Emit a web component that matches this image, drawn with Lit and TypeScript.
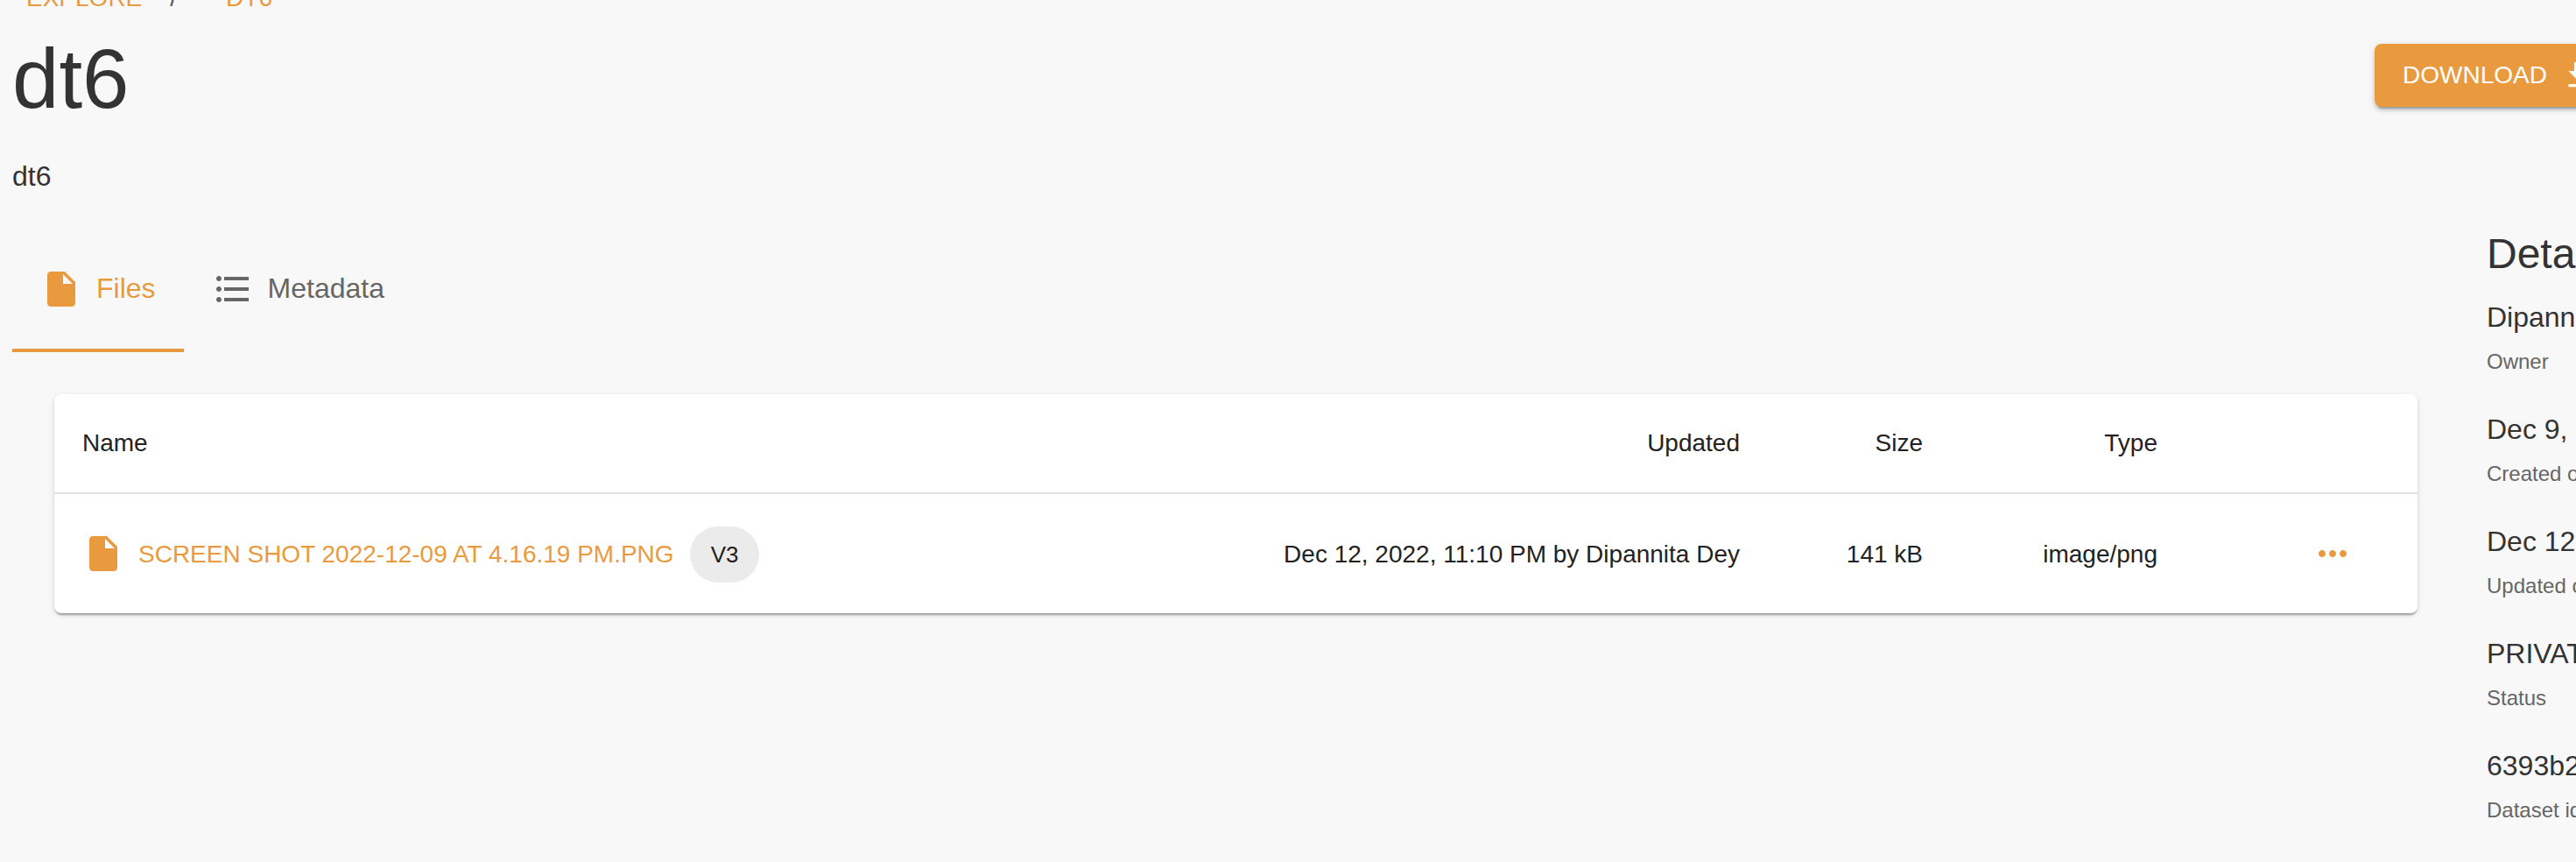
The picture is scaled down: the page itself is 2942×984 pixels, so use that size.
import { LitElement, html, css, svg } from "lit";
import { customElement } from "lit/decorators.js";

const fileIcon = svg`<path d="M6 2c-1.1 0-1.99.9-1.99 2L4 20c0 1.1.89 2 1.99 2H18c1.1 0 2-.9 2-2V8l-6-6H6zm7 7V3.5L18.5 9H13z"/>`;
const listIcon = svg`<path d="M4 10.5c-.83 0-1.5.67-1.5 1.5s.67 1.5 1.5 1.5 1.5-.67 1.5-1.5-.67-1.5-1.5-1.5zm0-6c-.83 0-1.5.67-1.5 1.5S3.17 7.5 4 7.5 5.5 6.83 5.5 6 4.83 4.5 4 4.5zm0 12c-.83 0-1.5.68-1.5 1.5s.68 1.5 1.5 1.5 1.5-.68 1.5-1.5-.67-1.5-1.5-1.5zM7 19h14v-2H7v2zm0-6h14v-2H7v2zm0-8v2h14V5H7z"/>`;
const downloadIcon = svg`<path d="M19 9h-4V3H9v6H5l7 7 7-7zM5 18v2h14v-2H5z"/>`;
const moreIcon = svg`<path d="M6 10c-1.1 0-2 .9-2 2s.9 2 2 2 2-.9 2-2-.9-2-2-2zm12 0c-1.1 0-2 .9-2 2s.9 2 2 2 2-.9 2-2-.9-2-2-2zm-6 0c-1.1 0-2 .9-2 2s.9 2 2 2 2-.9 2-2-.9-2-2-2z"/>`;

const details = [
  { value: "Dipannita Dey", label: "Owner" },
  { value: "Dec 9, 2022, 4:17 PM", label: "Created on" },
  { value: "Dec 12, 2022, 11:10 PM", label: "Updated on" },
  { value: "PRIVATE", label: "Status" },
  { value: "6393b2e5e4b05e7e1c0f3a71", label: "Dataset id" },
];

@customElement("app-root")
export class AppRoot extends LitElement {
  static styles = css`
    :host {
      display: block;
      width: 100vw;
      height: 100vh;
      overflow: hidden;
      background: #f8f8f8;
      font-family: "Liberation Sans", Arial, sans-serif;
      color: #333;
    }
    .page {
      margin-top: -18px;
      padding-left: 14px;
      width: 3100px;
    }
    svg {
      display: block;
      fill: currentColor;
      flex: none;
    }
    .crumbs {
      display: flex;
      font-size: 28px;
      line-height: 32px;
      padding-left: 16px;
      color: #e99a3f;
    }
    .crumb-sep {
      color: #555;
      margin: 0 56px 0 32px;
    }
    .head {
      display: grid;
      grid-template-columns: 2698px auto;
      align-items: start;
      margin-top: 20px;
    }
    h1 {
      margin: 0;
      font-size: 96px;
      line-height: 112px;
      font-weight: 400;
      color: #333;
    }
    .download {
      display: flex;
      align-items: center;
      gap: 16px;
      height: 72px;
      box-sizing: border-box;
      margin-top: 16px;
      padding: 0 32px;
      border-radius: 8px;
      background: #e99a3f;
      color: #fff;
      font-size: 28px;
      box-shadow: 0 6px 2px -4px rgba(0, 0, 0, 0.2), 0 4px 4px 0 rgba(0, 0, 0, 0.14), 0 2px 10px 0 rgba(0, 0, 0, 0.12);
    }
    .download svg {
      width: 40px;
      height: 40px;
    }
    .content {
      display: grid;
      grid-template-columns: 2826px 400px;
      margin-top: 35px;
    }
    .desc {
      font-size: 32px;
      line-height: 40px;
    }
    .tabs {
      display: flex;
      margin-top: 37px;
    }
    .tab {
      display: flex;
      align-items: center;
      gap: 16px;
      height: 144px;
      box-sizing: border-box;
      padding: 8px 32px 4px;
      font-size: 32px;
      color: #666;
      border-bottom: 4px solid transparent;
    }
    .tab svg {
      width: 48px;
      height: 48px;
    }
    .tab span {
      line-height: 40px;
      margin-bottom: 2px;
    }
    .tab.active {
      color: #e99a3f;
      border-bottom-color: #e99a3f;
    }
    .card {
      margin: 48px 0 0 48px;
      width: 2699px;
      background: #fff;
      border-radius: 8px;
      color: #222;
      font-size: 28px;
      box-shadow: 0 4px 2px -2px rgba(0, 0, 0, 0.2), 0 2px 2px 0 rgba(0, 0, 0, 0.14), 0 2px 6px 0 rgba(0, 0, 0, 0.12);
    }
    .row {
      display: grid;
      grid-template-columns: 1200px 725px 209px 268px 297px;
      align-items: center;
    }
    .row.header {
      height: 112px;
      border-bottom: 2px solid #e0e0e0;
    }
    .row.body {
      height: 136px;
    }
    .num {
      text-align: right;
      white-space: nowrap;
    }
    .row.body .num {
      padding-top: 2px;
    }
    .name {
      padding-left: 32px;
    }
    .name-cell {
      display: flex;
      align-items: center;
      padding-left: 32px;
      color: #e99a3f;
    }
    .name-cell svg {
      width: 48px;
      height: 48px;
      margin-right: 16px;
    }
    .name-cell span {
      margin-top: 2px;
    }
    .chip {
      display: flex;
      align-items: center;
      height: 64px;
      padding: 0 24px;
      margin-left: 18px;
      border-radius: 32px;
      background: #ebebeb;
      color: #222;
      font-size: 26px;
    }
    .more {
      justify-self: end;
      margin-right: 73px;
      color: #e99a3f;
    }
    .more svg {
      width: 48px;
      height: 48px;
    }
    .details {
      padding-top: 81px;
      white-space: nowrap;
    }
    h2 {
      margin: 0 0 24px;
      font-size: 48px;
      line-height: 56px;
      font-weight: 400;
      color: #333;
    }
    .items {
      display: flex;
      flex-direction: column;
      gap: 41px;
    }
    .item {
      display: flex;
      flex-direction: column;
      gap: 15px;
    }
    .value {
      font-size: 32px;
      line-height: 40px;
      color: #333;
    }
    .label {
      font-size: 24px;
      line-height: 32px;
      color: #666;
    }
  `;

  render() {
    return html`
      <div class="page">
        <div class="crumbs">
          <span>EXPLORE</span><span class="crumb-sep">/</span><span>DT6</span>
        </div>
        <div class="head">
          <h1>dt6</h1>
          <div class="download">
            <span>DOWNLOAD</span>
            <svg viewBox="0 0 24 24">${downloadIcon}</svg>
          </div>
        </div>
        <div class="content">
          <div>
            <div class="desc">dt6</div>
            <div class="tabs">
              <div class="tab active">
                <svg viewBox="0 0 24 24">${fileIcon}</svg><span>Files</span>
              </div>
              <div class="tab">
                <svg viewBox="0 0 24 24">${listIcon}</svg><span>Metadata</span>
              </div>
            </div>
            <div class="card">
              <div class="row header">
                <div class="name">Name</div>
                <div class="num">Updated</div>
                <div class="num">Size</div>
                <div class="num">Type</div>
                <div></div>
              </div>
              <div class="row body">
                <div class="name-cell">
                  <svg viewBox="0 0 24 24">${fileIcon}</svg>
                  <span>SCREEN SHOT 2022-12-09 AT 4.16.19 PM.PNG</span>
                  <span class="chip">V3</span>
                </div>
                <div class="num">Dec 12, 2022, 11:10 PM by Dipannita Dey</div>
                <div class="num">141 kB</div>
                <div class="num">image/png</div>
                <div class="more"><svg viewBox="0 0 24 24">${moreIcon}</svg></div>
              </div>
            </div>
          </div>
          <div class="details">
            <h2>Details</h2>
            <div class="items">
              ${details.map(
                (d) => html`<div class="item">
                  <div class="value">${d.value}</div>
                  <div class="label">${d.label}</div>
                </div>`
              )}
            </div>
          </div>
        </div>
      </div>
    `;
  }
}
